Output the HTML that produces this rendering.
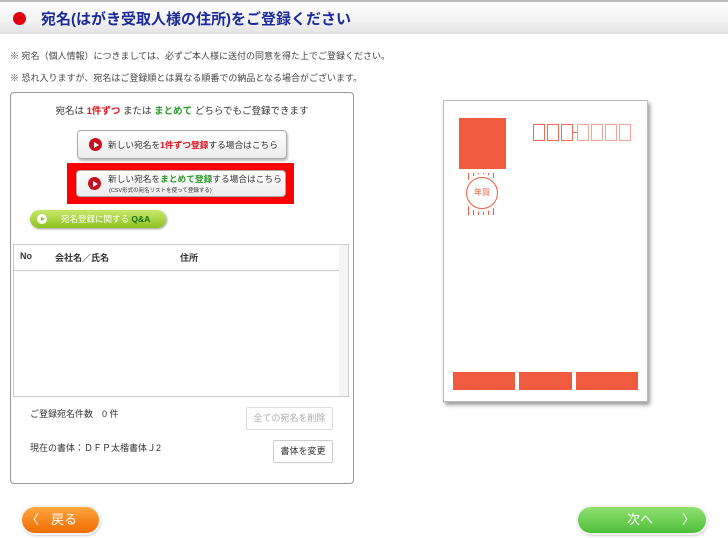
<!DOCTYPE html>
<html><head><meta charset="utf-8">
<style>
*{margin:0;padding:0;box-sizing:border-box}
body{width:728px;height:538px;background:#fff;font-family:"Liberation Sans","Noto Sans CJK JP",sans-serif;position:relative;overflow:hidden;color:#333}
.a{position:absolute}
.hdr{left:0;top:0;width:728px;height:34px;background:linear-gradient(#fff,#f3f3f3 60%,#e4e4e4);border-top:2px solid #bbb;border-bottom:1px solid #ddd}
.dot{left:13px;top:12px;width:13px;height:13px;border-radius:50%;background:#e0000f}
.title{left:41px;top:8px;font-size:15px;font-weight:bold;color:#1c2a9a;white-space:nowrap}
.note{left:10px;font-size:9px;color:#444;white-space:nowrap}
.panel{left:10px;top:92px;width:344px;height:392px;border:1px solid #999;border-radius:4px}
.btn{background:linear-gradient(#fff,#ececec);border:1px solid #aaa;border-radius:4px;box-shadow:1px 2px 2px #bbb}
.play{width:13px;height:13px;border-radius:50%;background:#c8101e}
.play:after{content:"";position:absolute;left:5px;top:3.5px;border-left:5px solid #fff;border-top:3px solid transparent;border-bottom:3px solid transparent}
.red{color:#e0101e;font-weight:bold}.grn{color:#2a9a28;font-weight:bold}
.zip{border:1.5px solid #ee6a55;width:12px;height:17px;top:124px}
</style></head><body>
<div class="a hdr"></div>
<div class="a dot"></div>
<div class="a title">宛名(はがき受取人様の住所)をご登録ください</div>
<div class="a note" style="top:49px">※ 宛名（個人情報）につきましては、必ずご本人様に送付の同意を得た上でご登録ください。</div>
<div class="a note" style="top:71px">※ 恐れ入りますが、宛名はご登録順とは異なる順番での納品となる場合がございます。</div>

<div class="a panel"></div>
<div class="a" style="left:10px;top:103px;width:344px;text-align:center;font-size:9.5px;color:#333">宛名は <span class="red">1件ずつ</span> または <span class="grn">まとめて</span> どちらでもご登録できます</div>

<div class="a btn" style="left:77px;top:130px;width:210px;height:29px"></div>
<div class="a play" style="left:89px;top:138px"></div>
<div class="a" style="left:108px;top:138px;font-size:8.7px;white-space:nowrap">新しい宛名を<span class="red">1件ずつ登録</span>する場合はこちら</div>

<div class="a" style="left:67px;top:163px;width:227px;height:41px;background:#f00"></div>
<div class="a btn" style="left:76px;top:170px;width:210px;height:27px;box-shadow:none"></div>
<div class="a play" style="left:88px;top:177px"></div>
<div class="a" style="left:108px;top:172px;font-size:8.7px;white-space:nowrap">新しい宛名を<span class="grn">まとめて登録</span>する場合はこちら</div>
<div class="a" style="left:109px;top:186px;font-size:5.5px;white-space:nowrap;color:#333">(CSV形式の宛名リストを使って登録する)</div>

<div class="a" style="left:30px;top:210px;width:136px;height:18px;border-radius:9px;background:linear-gradient(#c7e86a,#8fc31f);box-shadow:1px 1px 2px #999"></div>
<div class="a" style="left:37px;top:214px;width:10px;height:10px;border-radius:50%;background:#fff"></div>
<div class="a" style="left:41px;top:216.5px;border-left:4px solid #8fc31f;border-top:2.5px solid transparent;border-bottom:2.5px solid transparent"></div>
<div class="a" style="left:61px;top:213px;font-size:8.5px;color:#fff;white-space:nowrap">宛名登録に関する <b style="color:#1c6e1c">Q&amp;A</b></div>

<div class="a" style="left:13px;top:244px;width:336px;height:153px;border:1px solid #ccc"></div>
<div class="a" style="left:339px;top:245px;width:9px;height:151px;background:#f5f5f5"></div>
<div class="a" style="left:14px;top:270px;width:325px;height:1px;background:#ccc"></div>
<div class="a" style="left:20px;top:251px;font-size:9px;font-weight:bold">No</div>
<div class="a" style="left:55px;top:251px;font-size:9px;font-weight:bold">会社名／氏名</div>
<div class="a" style="left:180px;top:251px;font-size:9px;font-weight:bold">住所</div>

<div class="a" style="left:30px;top:407px;font-size:9px">ご登録宛名件数　0 件</div>
<div class="a" style="left:246px;top:407px;width:87px;height:23px;border:1px solid #ddd;border-radius:2px;font-size:9px;color:#aaa;text-align:center;line-height:21px">全ての宛名を削除</div>
<div class="a" style="left:30px;top:441px;font-size:9px">現在の書体：ＤＦＰ太楷書体Ｊ2</div>
<div class="a" style="left:273px;top:440px;width:60px;height:23px;border:1px solid #ccc;border-radius:2px;font-size:9px;text-align:center;line-height:21px">書体を変更</div>

<div class="a" style="left:22px;top:507px;width:77px;height:26px;border-radius:13px;background:linear-gradient(#ffa640,#f06c00);box-shadow:0 0 0 2px #f3f3f3,1px 2px 3px #aaa;color:#fff;font-size:13px;line-height:26px"><span style="position:absolute;left:4px">〈</span><span style="position:absolute;left:29px">戻る</span></div>
<div class="a" style="left:578px;top:507px;width:128px;height:26px;border-radius:13px;background:linear-gradient(#8fe070,#4fbf3a);box-shadow:0 0 0 2px #f3f3f3,1px 2px 3px #aaa;color:#fff;font-size:13px;line-height:26px"><span style="position:absolute;left:49px">次へ</span><span style="position:absolute;left:104px">〉</span></div>

<div class="a" style="left:443px;top:100px;width:205px;height:302px;border:1px solid #bbb;box-shadow:2px 3px 4px #999;background:#fff"></div>
<div class="a" style="left:459px;top:118px;width:47px;height:51px;background:#f05b40"></div>
<div class="a" style="left:468px;top:173px;width:30px;height:42px;background:repeating-linear-gradient(90deg,#f05b40 0 1px,transparent 1px 5px)"></div>
<div class="a" style="left:466px;top:177px;width:32px;height:32px;border-radius:50%;background:#fff;border:1.5px solid #f05b40;box-shadow:0 0 0 3px #fff;font-size:8px;color:#f05b40;text-align:center;line-height:29px">年賀</div>
<div class="a zip" style="left:533px"></div>
<div class="a zip" style="left:547px"></div>
<div class="a zip" style="left:561px"></div>
<div class="a" style="left:573px;top:132px;width:4px;height:1px;background:#ee6a55"></div>
<div class="a zip" style="left:577px;border-color:#f3a393"></div>
<div class="a zip" style="left:591px;border-color:#f3a393"></div>
<div class="a zip" style="left:605px;border-color:#f3a393"></div>
<div class="a zip" style="left:619px;border-color:#f3a393"></div>
<div class="a" style="left:453px;top:372px;width:62px;height:18px;background:#f05b40"></div>
<div class="a" style="left:519px;top:372px;width:53px;height:18px;background:#f05b40"></div>
<div class="a" style="left:576px;top:372px;width:62px;height:18px;background:#f05b40"></div>
</body></html>
